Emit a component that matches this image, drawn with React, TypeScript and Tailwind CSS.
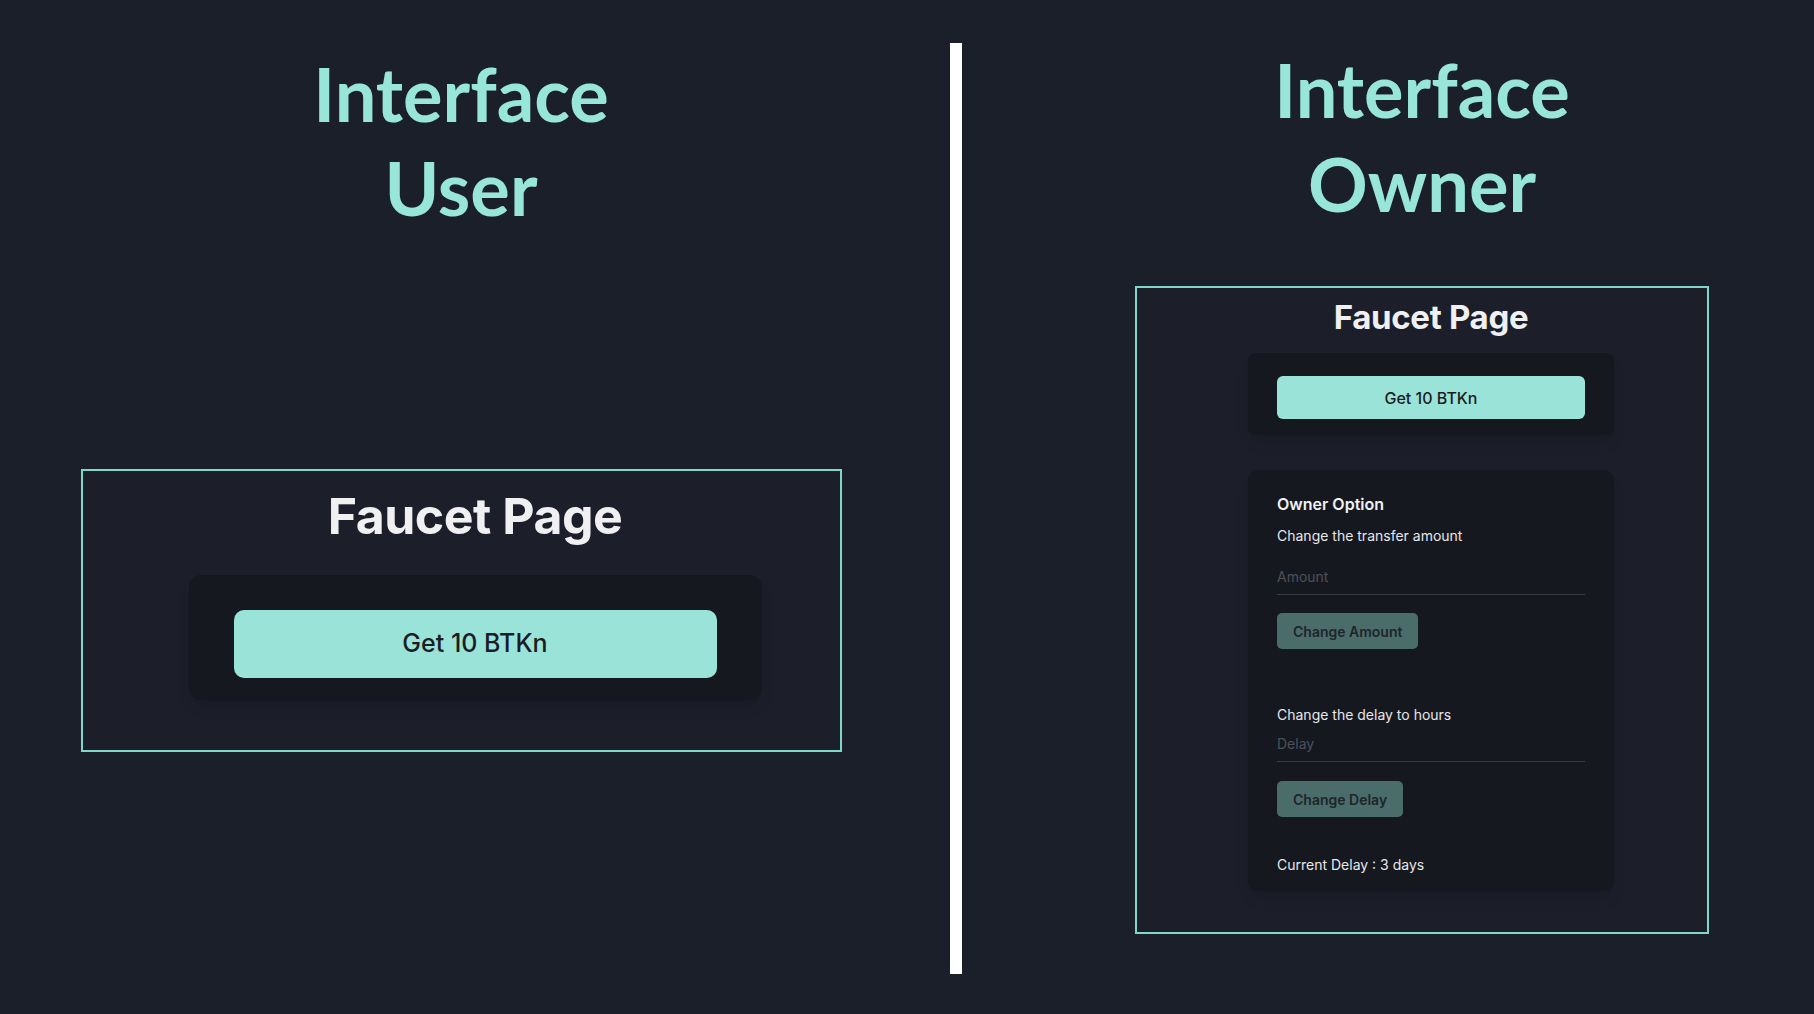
import React from "react";

const titleFont = { fontFamily: "Lato, 'Open Sans', sans-serif" };

function FaucetButton({ big }: { big?: boolean }) {
  return (
    <button
      className={
        big
          ? "w-[483px] h-[68px] rounded-[10px] bg-[#9ae3d9] text-[25px] font-medium text-[#1a1d24]"
          : "w-[308px] h-[43px] rounded-[6px] bg-[#9ae3d9] text-[16px] font-medium text-[#1a1d24]"
      }
    >
      Get 10 BTKn
    </button>
  );
}

function OwnerOptions() {
  return (
    <div className="mt-[35px] w-[366px] rounded-[10px] bg-[#16181f] px-[29px] pt-[22px] pb-[16px] shadow-lg">
      <h3 className="text-[16px] leading-[24px] font-semibold text-[#f1f1f3]">Owner Option</h3>
      <p className="mt-[10px] text-[14px] leading-[20px] text-[#e6e7ea]">Change the transfer amount</p>
      <input
        placeholder="Amount"
        className="mt-[12px] block w-full h-[37px] bg-transparent border-b border-[#383c47] text-[14px] text-white placeholder:text-[#4c515c] outline-none"
      />
      <button className="mt-[18px] h-[36px] px-[16px] rounded-[5px] bg-[#4a6c6a] text-[14px] font-semibold text-[#1d2629]">
        Change Amount
      </button>
      <p className="mt-[56px] text-[14px] leading-[20px] text-[#e6e7ea]">Change the delay to hours</p>
      <input
        placeholder="Delay"
        className="block w-full h-[37px] bg-transparent border-b border-[#383c47] text-[14px] text-white placeholder:text-[#4c515c] outline-none"
      />
      <button className="mt-[19px] h-[36px] px-[16px] rounded-[5px] bg-[#4a6c6a] text-[14px] font-semibold text-[#1d2629]">
        Change Delay
      </button>
      <p className="mt-[38px] text-[14px] leading-[20px] text-[#e6e7ea]">Current Delay : 3 days</p>
    </div>
  );
}

export default function App() {
  return (
    <div
      className="w-[1814px] h-[1014px] overflow-hidden bg-[#1b1f2a] flex"
      style={{ fontFamily: "Inter, 'Noto Sans', sans-serif" }}
    >
      {/* User side */}
      <div className="w-[950px] flex flex-col items-center pr-[28px] pt-[47px]">
        <h1 className="text-[74px] leading-[94px] font-bold text-[#98e5da] text-center" style={titleFont}>
          Interface
          <br />
          User
        </h1>
        <div className="mt-[234px] w-[761px] h-[283px] border-2 border-[#7fd6cb] bg-[#1c1f2a] flex flex-col items-center pl-[28px] pt-[20px]">
          <h2 className="text-[50px] leading-[50px] font-bold tracking-[-0.01em] text-[#f0f0f2]">Faucet Page</h2>
          <div className="mt-[34px] w-[573px] rounded-[12px] bg-[#16181f] flex justify-center pt-[35px] pb-[22px] shadow-lg">
            <FaucetButton big />
          </div>
        </div>
      </div>

      {/* Divider */}
      <div className="mt-[43px] w-[12px] h-[931px] bg-white shrink-0" />

      {/* Owner side */}
      <div className="flex-1 flex flex-col items-center pl-[68px] pt-[43px]">
        <h1 className="text-[74px] leading-[94px] font-bold text-[#98e5da] text-center" style={titleFont}>
          Interface
          <br />
          Owner
        </h1>
        <div className="mt-[55px] w-[574px] h-[648px] border-2 border-[#7fd6cb] bg-[#1c1f2a] flex flex-col items-center pl-[18px] pt-[9px]">
          <h2 className="text-[33px] leading-[40px] font-bold tracking-[-0.01em] text-[#f0f0f2]">Faucet Page</h2>
          <div className="mt-[16px] w-[366px] rounded-[8px] bg-[#16181f] flex justify-center pt-[23px] pb-[16px] shadow-lg">
            <FaucetButton />
          </div>
          <OwnerOptions />
        </div>
      </div>
    </div>
  );
}
